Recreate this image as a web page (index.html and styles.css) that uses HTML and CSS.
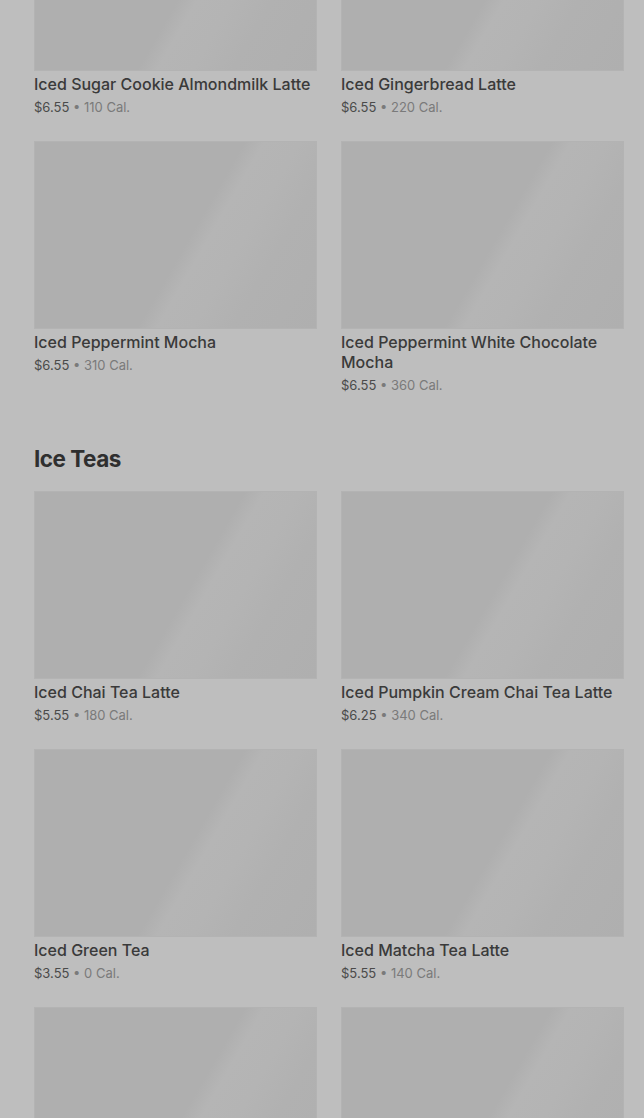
FILE: index.html
```html
<!DOCTYPE html>
<html lang="en">
<head>
<meta charset="UTF-8">
<meta name="viewport" content="width=device-width, initial-scale=1">
<title>Menu</title>
<link rel="stylesheet" href="styles.css">
</head>
<body>
  <div class="menu">
    <section class="menuSec first">
      <ul class="itemGrid">
        <li class="item">
          <div class="thumb"></div>
          <p class="name">Iced Sugar Cookie Almondmilk Latte</p>
          <p class="meta"><span class="price">$6.55</span> • 110 Cal.</p>
        </li>
        <li class="item">
          <div class="thumb"></div>
          <p class="name">Iced Gingerbread Latte</p>
          <p class="meta"><span class="price">$6.55</span> • 220 Cal.</p>
        </li>
        <li class="item">
          <div class="thumb"></div>
          <p class="name">Iced Peppermint Mocha</p>
          <p class="meta"><span class="price">$6.55</span> • 310 Cal.</p>
        </li>
        <li class="item">
          <div class="thumb"></div>
          <p class="name">Iced Peppermint White Chocolate Mocha</p>
          <p class="meta"><span class="price">$6.55</span> • 360 Cal.</p>
        </li>
      </ul>
    </section>

    <section class="menuSec">
      <h2 class="secTtl">Ice Teas</h2>
      <ul class="itemGrid">
        <li class="item">
          <div class="thumb"></div>
          <p class="name">Iced Chai Tea Latte</p>
          <p class="meta"><span class="price">$5.55</span> • 180 Cal.</p>
        </li>
        <li class="item">
          <div class="thumb"></div>
          <p class="name">Iced Pumpkin Cream Chai Tea Latte</p>
          <p class="meta"><span class="price">$6.25</span> • 340 Cal.</p>
        </li>
        <li class="item">
          <div class="thumb"></div>
          <p class="name">Iced Green Tea</p>
          <p class="meta"><span class="price">$3.55</span> • 0 Cal.</p>
        </li>
        <li class="item">
          <div class="thumb"></div>
          <p class="name">Iced Matcha Tea Latte</p>
          <p class="meta"><span class="price">$5.55</span> • 140 Cal.</p>
        </li>
        <li class="item">
          <div class="thumb"></div>
        </li>
        <li class="item">
          <div class="thumb"></div>
        </li>
      </ul>
    </section>
  </div>
</body>
</html>
```

FILE: styles.css
```css
* { margin: 0; padding: 0; box-sizing: border-box; }
ul { list-style: none; }

html, body {
  height: 100%;
  overflow: hidden;
}
body {
  background: #bebebe;
  font-family: Inter, "Noto Sans", "Liberation Sans", sans-serif;
  color: #3a3a3a;
}

.menu {
  padding: 0 20px 0 34px;
}

/* page is scrolled: first row sits partly above the fold */
.menuSec.first { margin-top: -117px; }
.menuSec + .menuSec { margin-top: 47px; }

.secTtl {
  font-size: 22.5px;
  line-height: 34px;
  font-weight: 700;
  color: #2f2f2f;
  letter-spacing: -0.5px;
  margin-bottom: 15px;
}

.itemGrid {
  display: grid;
  grid-template-columns: 283px 283px;
  column-gap: 24px;
  row-gap: 24px;
  align-items: start;
}

.thumb {
  height: 188px;
  background: linear-gradient(120deg, #afafaf 0%, #afafaf 54%, #b5b5b5 59%, #b4b4b4 68%, #b1b1b1 78%, #afafaf 100%);
  box-shadow: inset 0 0 0 1px #b3b3b3;
}

.name {
  margin-top: 3px;
  font-size: 16px;
  line-height: 20px;
  font-weight: 500;
  color: #3a3a3a;
}

.meta {
  margin-top: 3px;
  font-size: 13px;
  line-height: 20px;
  color: #7a7a7a;
}
.meta .price { color: #4a4a4a; }
```
